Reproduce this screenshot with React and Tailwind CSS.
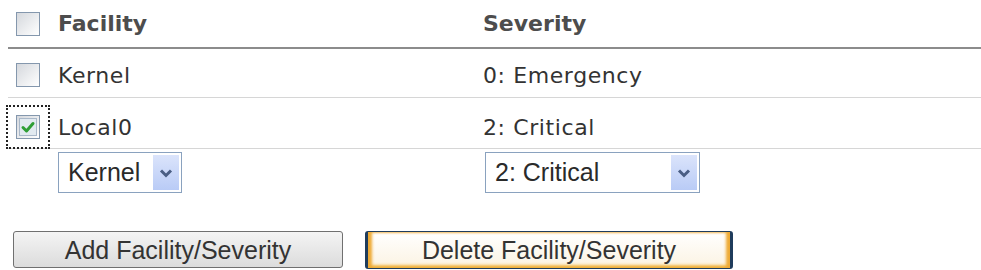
import React from 'react';

function CheckBox({ checked }) {
  return (
    <div className="flex h-[24px] w-[24px] items-center justify-center border border-[#8497ad] bg-linear-to-br from-[#d5d8dd] to-white">
      {checked && (
        <div className="flex h-[18px] w-[18px] items-center justify-center border border-[#a9b8c9] bg-[#e2eaf0]">
          <svg width="16" height="16" viewBox="0 0 16 16">
            <path d="M3 8.5 L6.5 12 L13 4.5" fill="none" stroke="#2f9e35" strokeWidth="3" strokeLinecap="round" strokeLinejoin="round" />
          </svg>
        </div>
      )}
    </div>
  );
}

function FakeSelect({ value, className }) {
  return (
    <div className={`flex h-[41px] items-center border border-[#8aa2bf] bg-white ${className}`}>
      <span className="flex-1 pl-[9px] font-['Liberation_Sans',Arial,sans-serif] text-[25px] tracking-normal text-[#2a2a2a]">
        {value}
      </span>
      <div className="mr-[2px] flex h-[35px] w-[26px] items-center justify-center bg-linear-to-b from-[#dbe4fb] to-[#b9cbf6]">
        <svg width="14" height="10" viewBox="0 0 14 10">
          <path d="M2 2.5 L7 7.5 L12 2.5" fill="none" stroke="#4a5e84" strokeWidth="3" />
        </svg>
      </div>
    </div>
  );
}

function App() {
  return (
    <div className="h-[270px] w-[981px] overflow-hidden bg-white font-['DejaVu_Sans',Verdana,sans-serif] text-[22px] tracking-[0.6px] text-[#333]">
      <div className="ml-[8px]">
        <div className="flex h-[49px] items-center border-b-2 border-[#8c8c8c]">
          <div className="w-[50px] pl-[8px]">
            <CheckBox />
          </div>
          <div className="w-[425px] font-bold tracking-normal text-[#4d4d4d]">Facility</div>
          <div className="font-bold tracking-normal text-[#4d4d4d]">Severity</div>
        </div>
        <div className="flex h-[49px] items-center border-b border-[#d6d6d6] pt-[4px]">
          <div className="w-[50px] pl-[8px]">
            <CheckBox />
          </div>
          <div className="w-[425px]">Kernel</div>
          <div>0: Emergency</div>
        </div>
        <div className="flex h-[51px] items-center border-b border-[#d6d6d6] pt-[8px]">
          <div className="w-[50px] pl-[8px]">
            <div className="w-[24px] outline-2 outline-offset-[8px] outline-dotted outline-[#222]">
              <CheckBox checked />
            </div>
          </div>
          <div className="w-[425px]">Local0</div>
          <div>2: Critical</div>
        </div>
        <div className="mt-[3px] flex">
          <div className="w-[50px]" />
          <div className="w-[427px]">
            <FakeSelect value="Kernel" className="w-[124px]" />
          </div>
          <FakeSelect value="2: Critical" className="w-[215px]" />
        </div>
      </div>
      <div className="mt-[38px] flex gap-[22px] pl-[13px] font-['Liberation_Sans',Arial,sans-serif] text-[25px] tracking-normal text-[#333]">
        <button className="h-[37px] w-[330px] rounded-[3px] border border-[#707070] bg-linear-to-b from-[#f4f4f4] to-[#dcdcdc]">
          Add Facility/Severity
        </button>
        <button className="h-[38px] w-[368px] rounded-[3px] border-x-[3px] border-y border-[#1f3c5c] bg-linear-to-b from-white to-[#fbf3e2] shadow-[inset_4px_0_3px_#eeaa35,inset_-4px_0_3px_#eeaa35,inset_0_-3px_3px_#f2bb4c]">
          Delete Facility/Severity
        </button>
      </div>
    </div>
  );
}

export default App;
